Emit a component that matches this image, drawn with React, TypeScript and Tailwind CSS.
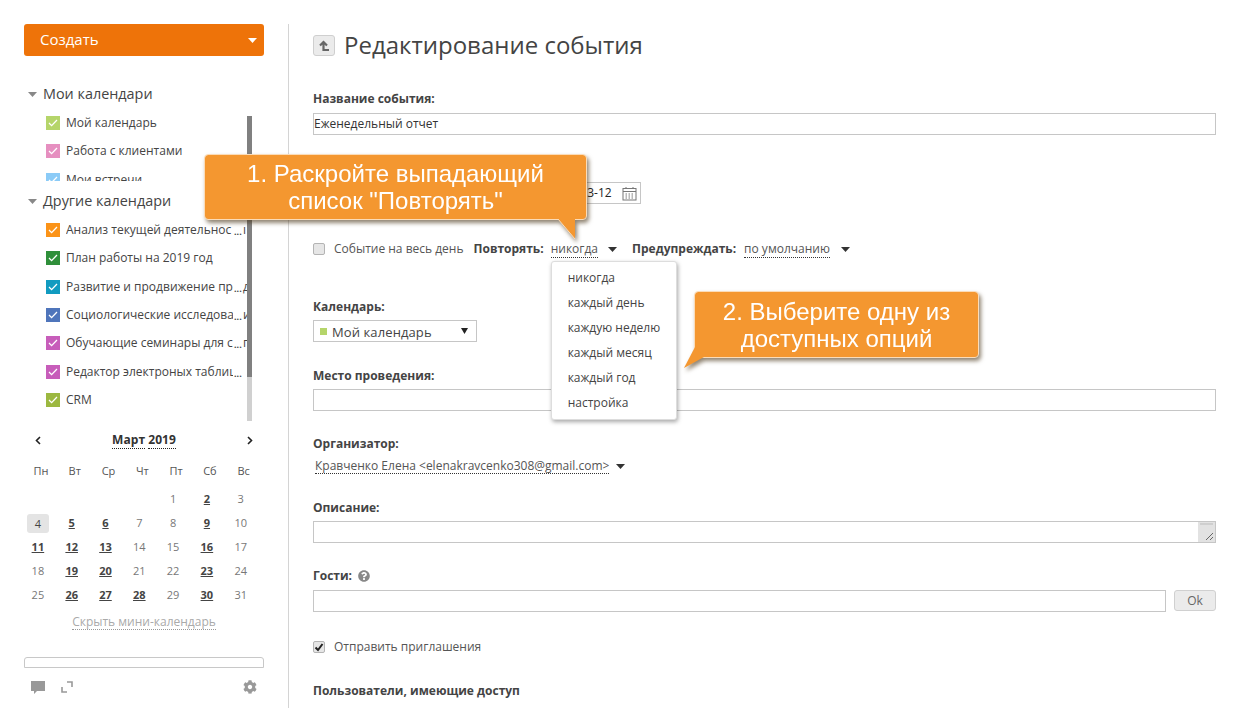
import { FaCog, FaQuestionCircle } from "react-icons/fa";

const MY_CALENDARS = [
  { head: "Мой календарь", color: "bg-[#b5d56a]" },
  { head: "Работа с клиентами", color: "bg-[#e68fc0]" },
  { head: "Мои встречи", color: "bg-[#8bcbf7]" },
];

const OTHER_CALENDARS = [
  { head: "Анализ текущей деятельнос", cut: true, tail: "ı", color: "bg-[#fb9318]" },
  { head: "План работы на 2019 год", color: "bg-[#2f8f3a]" },
  { head: "Развитие и продвижение пр", cut: true, tail: "д", color: "bg-[#119bc0]" },
  { head: "Социологические исследова", cut: true, tail: "и", color: "bg-[#4f75bb]" },
  { head: "Обучающие семинары для с", cut: true, tail: "г", color: "bg-[#c75dba]" },
  { head: "Редактор электроных таблиц", cut: true, color: "bg-[#c75dba]" },
  { head: "CRM", color: "bg-[#9cb840]" },
];

const WEEKDAYS = ["Пн", "Вт", "Ср", "Чт", "Пт", "Сб", "Вс"];
const BUSY_DAYS = [2, 5, 6, 9, 11, 12, 13, 16, 19, 20, 23, 26, 27, 28, 30];
const REPEAT_OPTIONS = ["никогда", "каждый день", "каждую неделю", "каждый месяц", "каждый год", "настройка"];

type CalendarItem = { head: string; cut?: boolean; tail?: string; color: string };

function Caret({ className = "" }: { className?: string }) {
  return (
    <svg width="9" height="5" viewBox="0 0 9 5" className={className}>
      <path d="M0 0h9L4.5 5z" fill="currentColor" />
    </svg>
  );
}

function CalendarRow({ item }: { item: CalendarItem }) {
  return (
    <div className="flex h-[28.33px] items-center pl-[22px] text-[12px] text-[#444]">
      <span className={`mr-[6px] flex h-[14px] w-[14px] shrink-0 items-center justify-center ${item.color}`}>
        <svg width="10" height="8" viewBox="0 0 10 8" fill="none" stroke="#fff" strokeWidth="1.3">
          <path d="M1 4l2.6 2.6L9 1" />
        </svg>
      </span>
      {item.cut ? (
        <span className="flex w-[181px] overflow-hidden whitespace-nowrap">
          <span className="w-[167px] shrink-0 overflow-hidden">{item.head}</span>
          <span className="mt-[4px] w-[10px] shrink-0 pl-[1px] text-[9px] font-bold leading-[14px]">...</span>
          <span className="shrink-0">{item.tail}</span>
        </span>
      ) : (
        <span className="whitespace-nowrap">{item.head}</span>
      )}
    </div>
  );
}

function MiniCalendar() {
  const days: (number | null)[] = [null, null, null, null];
  for (let d = 1; d <= 31; d++) days.push(d);
  return (
    <>
      <div className="mt-[18px] flex h-[16px] w-[240px] items-center justify-between pl-[11px] pr-[11px] text-[#222]">
        <svg width="6" height="9" viewBox="0 0 6 9" fill="none" stroke="currentColor" strokeWidth="1.6">
          <path d="M5 1L1.5 4.5 5 8" />
        </svg>
        <span className="flex gap-[3px] text-[12px] font-bold leading-[16px] tracking-[0.1px] text-[#333]">
          <span className="border-b border-dotted border-[#222]">Март</span>
          <span className="border-b border-dotted border-[#222]">2019</span>
        </span>
        <svg width="6" height="9" viewBox="0 0 6 9" fill="none" stroke="currentColor" strokeWidth="1.6">
          <path d="M1 1l3.5 3.5L1 8" />
        </svg>
      </div>
      <div className="mt-[11px] grid grid-cols-[repeat(7,33.8px)] text-center text-[11px] leading-[24px]">
        {WEEKDAYS.map((d) => (
          <span key={d} className="text-[#555]">
            {d}
          </span>
        ))}
      </div>
      <div className="ml-[-3px] mt-[4px] grid grid-cols-[repeat(7,33.8px)] grid-rows-[repeat(5,24px)] text-center text-[11px] leading-[24px] text-[#777]">
        {days.map((d, i) => {
          if (d === null) return <span key={i} />;
          if (d === 4) {
            return (
              <span key={i} className="flex items-center justify-center">
                <span className="h-[19px] w-[22px] rounded-[3px] bg-[#e4e4e4] leading-[19px] text-[#444]">4</span>
              </span>
            );
          }
          return BUSY_DAYS.includes(d) ? (
            <span key={i} className="font-bold text-[#444] underline">
              {d}
            </span>
          ) : (
            <span key={i}>{d}</span>
          );
        })}
      </div>
    </>
  );
}

function Sidebar() {
  return (
    <aside className="relative h-[708px] w-[289px] shrink-0 pl-[24px] pt-[24px]">
      <div className="flex h-[32px] w-[240px] items-center justify-between rounded-[3px] bg-[#ee7309] pl-[16px] pr-[7px] text-[15px] text-white">
        <span className="pb-[2px]">Создать</span>
        <Caret />
      </div>

      <div className="mt-[28px] flex h-[20px] items-center pl-[4px] text-[14.4px] text-[#444]">
        <Caret className="mr-[6px] text-[#888]" />
        Мои календари
      </div>
      <div className="mt-[5px] h-[72px] overflow-hidden">
        {MY_CALENDARS.map((c) => (
          <CalendarRow key={c.head} item={c} />
        ))}
      </div>

      <div className="mt-[10px] flex h-[20px] items-center pl-[4px] text-[14.4px] text-[#444]">
        <Caret className="mr-[6px] text-[#888]" />
        Другие календари
      </div>
      <div className="mt-[5px]">
        {OTHER_CALENDARS.map((c) => (
          <CalendarRow key={c.head} item={c} />
        ))}
      </div>

      {/* custom scrollbar lying over the lists */}
      <div className="absolute left-[247px] top-[116px] h-[305px] w-[5px] bg-[#d0d0d0]">
        <div className="h-[261px] bg-[#808080]" />
      </div>

      <MiniCalendar />

      <div className="mt-[7px] flex h-[16px] w-[240px] justify-center text-[12px] leading-[16px] text-[#aaa]">
        <span className="border-b border-dotted border-[#999]">Скрыть мини-календарь</span>
      </div>

      <div className="mt-[27px] h-[11px] w-[240px] rounded-t-[3px] border border-[#c8c8c8]" />

      <div className="mt-[11px] flex h-[16px] w-[240px] items-center justify-between pl-[7px] pr-[7px] text-[#999]">
        <div className="flex items-center gap-[16px]">
          <svg width="14" height="14" viewBox="0 0 14 14" fill="currentColor">
            <path d="M0 1h14v10H6l-3 3v-3H0z" />
          </svg>
          <svg width="12" height="12" viewBox="0 0 12 12" fill="none" stroke="currentColor" strokeWidth="1.6">
            <path d="M6 1h5v5M1 6v5h5" />
          </svg>
        </div>
        <FaCog size={14} />
      </div>
    </aside>
  );
}

function FieldLabel({ className = "", children }: { className?: string; children: React.ReactNode }) {
  return <div className={`h-[16px] text-[12px] font-bold leading-[18px] text-[#444] ${className}`}>{children}</div>;
}

function TextBox({ className = "", children }: { className?: string; children?: React.ReactNode }) {
  return (
    <div className={`h-[22px] border border-[#c6c6c6] bg-white text-[12px] leading-[20px] text-[#333] ${className}`}>
      {children}
    </div>
  );
}

function Checkbox({ checked = false }: { checked?: boolean }) {
  return (
    <span className="flex h-[12px] w-[12px] shrink-0 items-center justify-center rounded-[2px] border border-[#b4b4b4] bg-[#e6e6e6]">
      {checked ? (
        <svg width="10" height="9" viewBox="0 0 10 9" fill="none" stroke="#222" strokeWidth="2">
          <path d="M1.5 4.5L4 7l4.5-6" />
        </svg>
      ) : null}
    </span>
  );
}

function Dotted({ children }: { children: React.ReactNode }) {
  return <span className="border-b border-dotted border-[#333] leading-[15px]">{children}</span>;
}

function Callout({ className, children, tail }: { className: string; children: React.ReactNode; tail: React.ReactNode }) {
  return (
    <div className={`absolute [filter:drop-shadow(2px_3px_2px_rgba(70,50,20,0.6))] ${className}`}>
      <div className="flex h-full items-center justify-center rounded-[3px] bg-[#f49730] text-center [font-family:'Liberation_Sans',Arial,sans-serif] text-[24px] leading-[27px] text-white outline outline-1 outline-[#fbdcb8]">
        <div>{children}</div>
      </div>
      {tail}
    </div>
  );
}

function EventForm() {
  return (
    <main className="min-w-0 flex-1 pl-[24px] pr-[24px] pt-[35px]">
      <div className="flex h-[21px] items-center">
        <span className="mr-[9px] flex h-[21px] w-[22px] items-center justify-center rounded-[3px] border border-[#cfcfcf] bg-[#ebebeb] text-[#666]">
          <svg width="11" height="12" viewBox="0 0 11 12" fill="none" stroke="currentColor" strokeWidth="2.2">
            <path d="M1 5.5L4.5 2 8 5.5M4.5 2.5V10H10" />
          </svg>
        </span>
        <h1 className="whitespace-nowrap pb-[2px] text-[24px] font-normal leading-[21px] text-[#444]">Редактирование события</h1>
      </div>

      <FieldLabel className="mt-[34px]">Название события:</FieldLabel>
      <TextBox className="mt-[7px]">Еженедельный отчет</TextBox>

      <div className="ml-[217px] mt-[47px] flex h-[22px] w-[111px] items-center justify-between border border-[#c6c6c6] pl-[18px] pr-[3px] text-[12px] text-[#222]">
        2019-03-12
        <svg width="15" height="15" viewBox="0 0 15 15" fill="none" stroke="#777">
          <rect x="1" y="2.5" width="13" height="11.5" />
          <path d="M1 5.5h13M4 1v2M11 1v2" />
          <path d="M3.5 8h8M3.5 10h8M3.5 12h8" strokeDasharray="1.5 1.5" />
        </svg>
      </div>

      <div className="mt-[37px] flex h-[16px] items-center whitespace-nowrap text-[12px] text-[#555]">
        <Checkbox />
        <span className="ml-[9px]">Событие на весь день</span>
        <b className="ml-[10px] text-[#444]">Повторять:</b>
        <span className="relative ml-[7px]">
          <Dotted>никогда</Dotted>
          <div className="absolute left-0 top-[21px] z-10 w-[126px] rounded-[3px] border border-[#ddd] bg-white pb-[4px] pl-[16px] pt-[3px] leading-[25px] text-[#444] shadow-[1px_2px_4px_rgba(0,0,0,0.35)]">
            {REPEAT_OPTIONS.map((o) => (
              <div key={o}>{o}</div>
            ))}
          </div>
        </span>
        <Caret className="ml-[10px] text-[#333]" />
        <b className="ml-[15px] text-[#444]">Предупреждать:</b>
        <span className="ml-[8px]">
          <Dotted>по умолчанию</Dotted>
        </span>
        <Caret className="ml-[11px] text-[#333]" />
      </div>

      <FieldLabel className="mt-[41px]">Календарь:</FieldLabel>
      <div className="mt-[6px] flex h-[22px] w-[164px] items-center border border-[#c6c6c6] pl-[6px] pr-[8px] text-[13px] leading-[22px] text-[#444]">
        <span className="mr-[5px] h-[7px] w-[7px] bg-[#b5d56a]" />
        <span className="pt-[1px] tracking-[0.1px]">Мой календарь</span>
        <svg width="7" height="6" viewBox="0 0 7 6" className="ml-auto">
          <path d="M0 0h7L3.5 6z" fill="#222" />
        </svg>
      </div>

      <FieldLabel className="mt-[25px]">Место проведения:</FieldLabel>
      <TextBox className="mt-[6px]" />

      <FieldLabel className="mt-[24px]">Организатор:</FieldLabel>
      <div className="mt-[7px] flex h-[16px] items-center pl-[2px] text-[12px] text-[#555]">
        <Dotted>Кравченко Елена &lt;elenakravcenko308@gmail.com&gt;</Dotted>
        <Caret className="ml-[7px] text-[#333]" />
      </div>

      <FieldLabel className="mt-[25px]">Описание:</FieldLabel>
      <div className="mt-[6px] flex h-[22px] justify-end border border-[#c6c6c6]">
        <div className="relative w-[17px] bg-[#e2e2e2]">
          <svg width="17" height="20" viewBox="0 0 17 20" fill="none" stroke="#666" className="absolute inset-0">
            <path d="M2 2h13" stroke="#bbb" />
            <path d="M8 18l7-7M12 18l3-3" />
          </svg>
        </div>
      </div>

      <FieldLabel className="mt-[25px] flex items-center">
        Гости:
        <FaQuestionCircle size={12} className="ml-[6px] text-[#888]" />
      </FieldLabel>
      <div className="mt-[6px] flex gap-[8px]">
        <TextBox className="flex-1" />
        <div className="flex h-[21px] w-[42px] items-center justify-center rounded-[3px] border border-[#d0d0d0] bg-[#ebebeb] text-[12px] text-[#666]">
          Ok
        </div>
      </div>

      <div className="mt-[27px] flex h-[16px] items-center text-[12px] text-[#555]">
        <Checkbox checked />
        <span className="ml-[9px]">Отправить приглашения</span>
      </div>

      <div className="mt-[28px] h-[16px] text-[12px] font-bold leading-[16px] text-[#444]">Пользователи, имеющие доступ</div>
    </main>
  );
}

export default function App() {
  return (
    <div className="relative flex h-[708px] w-[1240px] overflow-hidden bg-white [font-family:'Open_Sans',sans-serif]">
      <Sidebar />
      <div className="absolute left-[288px] top-[24px] h-[684px] w-px bg-[#d4d4d4]" />
      <EventForm />

      <Callout
        className="left-[205px] top-[155px] z-20 h-[64px] w-[381px]"
        tail={
          <svg width="24" height="24" viewBox="0 0 24 24" className="absolute left-[352px] top-[62px]">
            <path d="M1 2l17 20V2z" fill="#f49730" />
            <path d="M1 2l17 20" stroke="#fbdcb8" fill="none" />
          </svg>
        }
      >
        1. Раскройте выпадающий
        <br />
        список "Повторять"
      </Callout>

      <Callout
        className="left-[695px] top-[292px] z-20 h-[65px] w-[283px]"
        tail={
          <svg width="24" height="24" viewBox="0 0 24 24" className="absolute left-[-12px] top-[53px]">
            <path d="M12 2L1 23l20-11z" fill="#f49730" />
          </svg>
        }
      >
        2. Выберите одну из
        <br />
        доступных опций
      </Callout>
    </div>
  );
}
